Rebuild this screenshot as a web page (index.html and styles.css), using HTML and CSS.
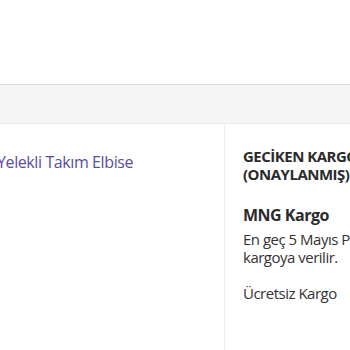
FILE: index.html
```html
<!DOCTYPE html>
<html lang="tr">
    <head>
        <meta charset="UTF-8">
        <title>Sipariş</title>
        <link rel="stylesheet" href="styles.css">
    </head>
    <body>
        <div class="topbar"></div>
        <div class="subbar"></div>
        <div class="orderRow">
            <div class="productCell">
                <span class="productName">Yelekli Takım Elbise</span>
            </div>
            <div class="cargoCell">
                <h3 class="cargoStatus">GECİKEN KARGO (ONAYLANMIŞ)</h3>
                <h4 class="cargoName">MNG Kargo</h4>
                <p class="cargoDate">En geç 5 Mayıs Pazartesi günü kargoya verilir.</p>
                <p class="cargoFree">Ücretsiz Kargo</p>
            </div>
        </div>
    </body>
</html>
```

FILE: styles.css
```css
body {
    margin: 0;
    font-family: "Open Sans", "Noto Sans", sans-serif;
    color: #333;
    background: #fff;
    overflow: hidden;
}
.topbar {
    height: 84px;
    border-bottom: 1px solid #dedede;
}
.subbar {
    height: 38px;
    background-color: #f5f5f5;
    border-bottom: 1px solid #ebebeb;
}
.orderRow {
    display: flex;
    height: 240px;
}
.productCell {
    width: 224px;
    flex-shrink: 0;
    overflow: hidden;
    padding-top: 28px;
}
.productName {
    display: block;
    margin-left: -3px;
    font-size: 16px;
    letter-spacing: -0.4px;
    line-height: 20px;
    color: #5a4c9c;
    white-space: nowrap;
}
.cargoCell {
    border-left: 1px solid #ececec;
    padding: 23px 0 0 18px;
    width: 200px;
    flex-shrink: 0;
}
.cargoStatus {
    margin: 0;
    font-size: 15px;
    letter-spacing: -0.5px;
    line-height: 18px;
    font-weight: 700;
    color: #2b2b2b;
}
.cargoName {
    margin: 22px 0 0;
    font-size: 16px;
    letter-spacing: -0.5px;
    line-height: 20px;
    font-weight: 700;
    color: #2b2b2b;
}
.cargoDate {
    margin: 5px 0 0;
    font-size: 15px;
    letter-spacing: -0.5px;
    line-height: 18px;
    width: 200px;
}
.cargoFree {
    margin: 18px 0 0;
    font-size: 15px;
    letter-spacing: -0.5px;
    line-height: 18px;
}
```
